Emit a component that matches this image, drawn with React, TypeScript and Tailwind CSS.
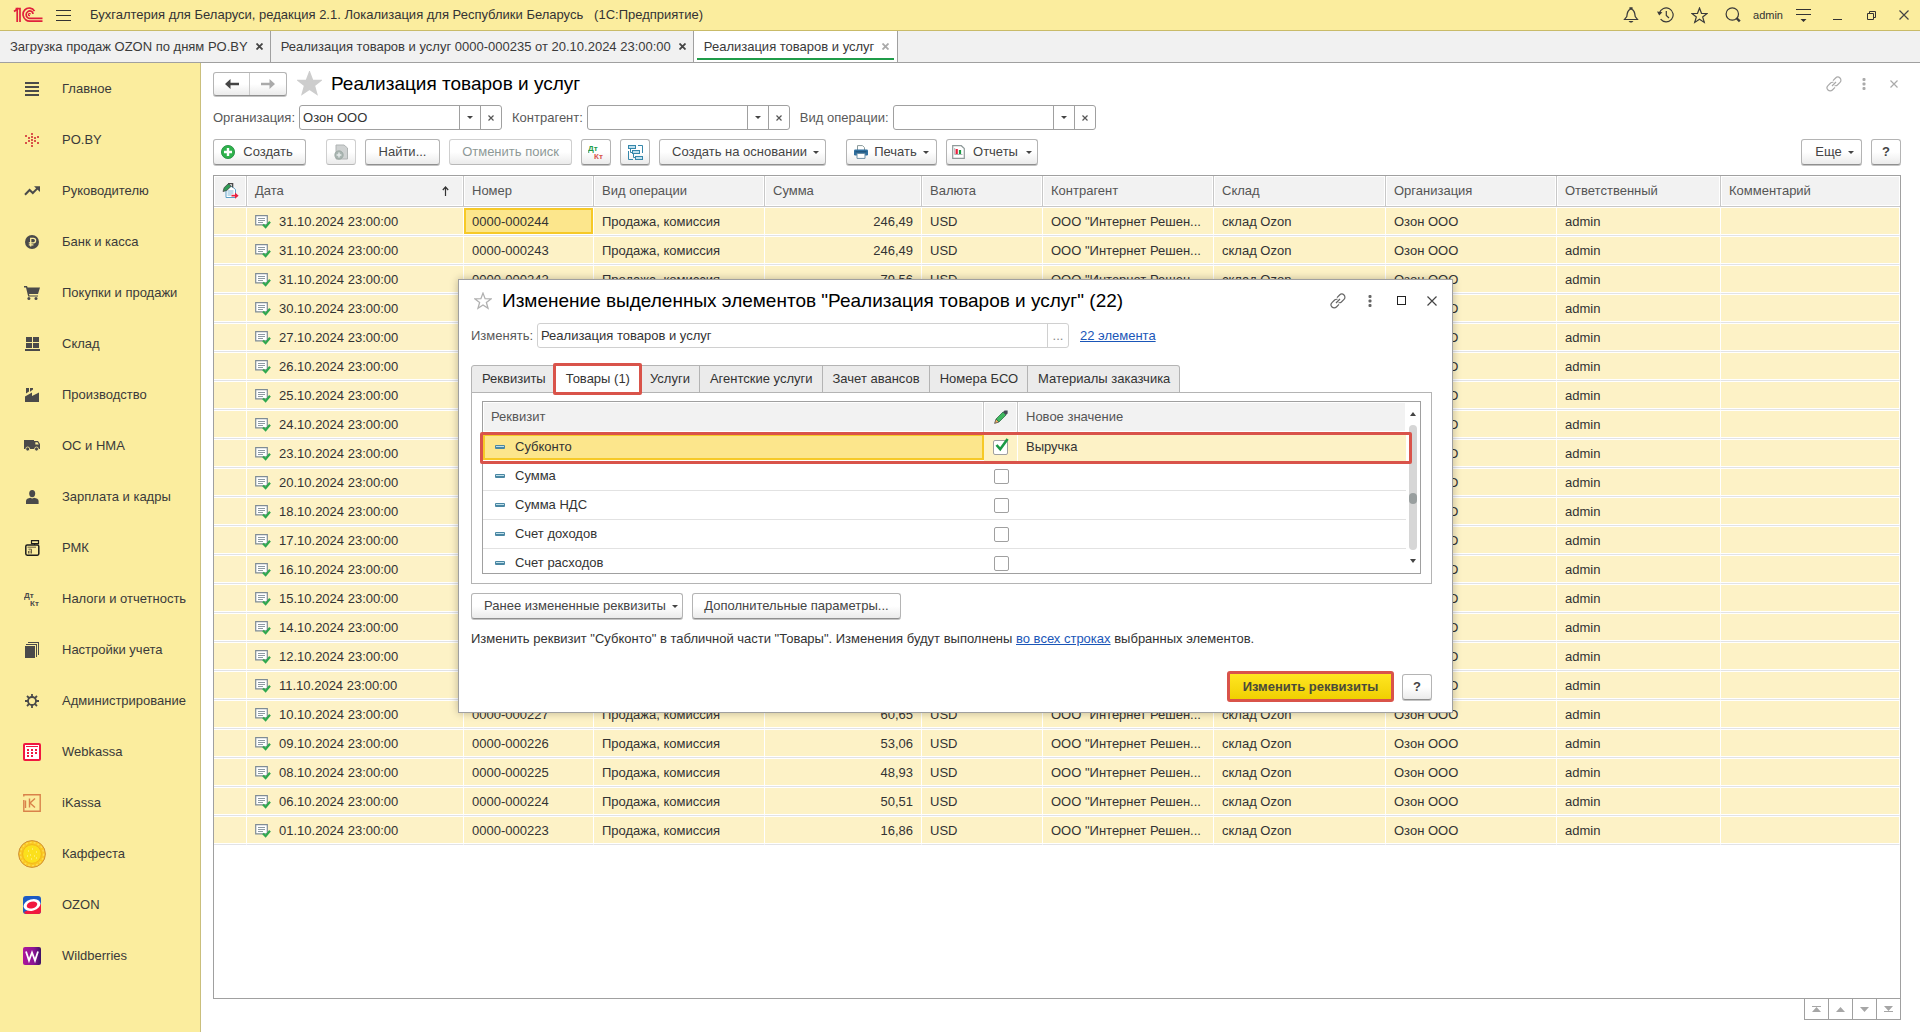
import type { ReactNode } from "react";
import clsx from "clsx";

const LOGO_RED = "#e0203c";

const LogoIcon = () => (
  <svg width="30" height="16" viewBox="0 0 30 16" fill="none" stroke={LOGO_RED} strokeWidth="1.7">
    <path d="M1 4.5 L4.2 2.2 V15" />
    <path d="M2.6 1.6 H7 V15" />
    <path d="M21.5 4.2 C19.5 0.4 14.5 0 11.8 2.9 C8.8 6.2 9.9 11 13 13 C14 13.8 15.2 14.1 16.5 14.1 H29.5" />
    <path d="M20 7 C20 4.4 17 3.2 14.8 4.6 C12.4 6.2 12.8 9.4 14.6 10.6 C15.4 11.2 16 11.3 17 11.3 H29.5" />
    <path d="M17.6 7.2 C17 6 15.2 6.6 15.4 8 C15.5 8.6 16 8.8 17 8.7" strokeWidth="1.2" />
  </svg>
);

const BellIcon = () => (
  <svg width="16" height="16" viewBox="0 0 16 16" fill="none" stroke="#3a3a3a" strokeWidth="1.2">
    <path d="M1.5 12.5 H14.5 L12.2 9.5 C11.8 6 11.6 3 8 2 C4.4 3 4.2 6 3.8 9.5 Z M7 2 V0.8 H9 V2" />
    <path d="M5.5 14 H10.5 L9 15.5 H7 Z" fill="#3a3a3a" stroke="none" />
  </svg>
);

const HistoryIcon = () => (
  <svg width="17" height="16" viewBox="0 0 17 16" fill="none" stroke="#3a3a3a" strokeWidth="1.2">
    <path d="M2.4 6 A7 7 0 1 1 3.6 12.2" />
    <path d="M9.3 4 V8.4 L12 11" />
    <path d="M0 4.5 L5.4 5.2 L2.2 8.6 Z" fill="#3a3a3a" stroke="none" />
  </svg>
);

const StarIcon = ({ size, fill, stroke }: { size: number; fill: string; stroke: string }) => (
  <svg width={size} height={size} viewBox="0 0 24 24" fill={fill} stroke={stroke} strokeWidth="1.7">
    <path d="M12 1.5 L14.8 8.9 L22.6 9.2 L16.5 14 L18.7 21.8 L12 17.3 L5.3 21.8 L7.5 14 L1.4 9.2 L9.2 8.9 Z" />
  </svg>
);

const SearchIcon = () => (
  <svg width="16" height="16" viewBox="0 0 16 16" fill="none" stroke="#3a3a3a">
    <circle cx="7.3" cy="7" r="6.2" strokeWidth="1.2" />
    <path d="M11.4 11 L14.8 14.4" strokeWidth="2.4" />
  </svg>
);

const LinkIcon = ({ color }: { color: string }) => (
  <svg width="16" height="16" viewBox="0 0 16 16" fill="none" stroke={color} strokeWidth="1.2">
    <path d="M7 4.6 L9.6 2 A3 3 0 0 1 14 6.4 L11.4 9 A3 3 0 0 1 8.6 9.6" />
    <path d="M9 11.4 L6.4 14 A3 3 0 0 1 2 9.6 L4.6 7 A3 3 0 0 1 7.4 6.4" />
    <path d="M6 10 L10 6" />
  </svg>
);

const DotsIcon = ({ color }: { color: string }) => (
  <svg width="4" height="12" viewBox="0 0 4 12" fill={color}>
    <rect x="0.5" y="0" width="3" height="3" rx="1" />
    <rect x="0.5" y="4.5" width="3" height="3" rx="1" />
    <rect x="0.5" y="9" width="3" height="3" rx="1" />
  </svg>
);

const CrossIcon = ({ size, color, width = 1.2 }: { size: number; color: string; width?: number }) => (
  <svg width={size} height={size} viewBox={`0 0 ${size} ${size}`} stroke={color} strokeWidth={width}>
    <path d={`M0.5 0.5 L${size - 0.5} ${size - 0.5} M${size - 0.5} 0.5 L0.5 ${size - 0.5}`} />
  </svg>
);

const CaretIcon = () => (
  <svg width="6" height="3" viewBox="0 0 6 3" fill="#444" className="shrink-0">
    <path d="M0 0 H6 L3 3 Z" />
  </svg>
);

const ArrowIcon = ({ color, flip }: { color: string; flip?: boolean }) => (
  <svg width="14" height="10" viewBox="0 0 14 10" className={clsx(flip && "rotate-180")}>
    <path d="M0 5 L5.5 0 V3.8 H14 V6.2 H5.5 V10 Z" fill={color} />
  </svg>
);

const DocPostedIcon = () => (
  <svg width="16" height="14" viewBox="0 0 16 14" fill="none" className="shrink-0">
    <path d="M0.7 0.7 H12.3 V9.8 H0.7 Z" fill="#fff" stroke="#7f8c95" strokeWidth="1.2" />
    <path d="M3 3.5 H10 M3 5.5 H10 M3 7.5 H8" stroke="#8d9aa2" />
    <path d="M8 9.5 L10.6 12.2 L15 6.8" stroke="#2fa84f" strokeWidth="2.2" />
  </svg>
);

const ListEditIcon = () => (
  <svg width="17" height="16" viewBox="0 0 17 16" fill="none">
    <path d="M4 3.5 H10 L13.5 6.5 V14.5 H4 Z" fill="#fff" stroke="#5aa0c8" />
    <path d="M5.5 8 H11.5 M5.5 10 H11.5 M5.5 12 H9.5" stroke="#7fb6d4" />
    <path d="M1 8.5 L2.2 4.6 L6.4 0.6 L9.2 3.2 L4.8 7.4 Z" fill="#2f9b55" stroke="#4a4a4a" strokeWidth="0.8" />
    <path d="M6 0.6 H10.6 V4.6" stroke="#4a4a4a" strokeWidth="1.4" />
    <path d="M9.5 11.8 H13 V9.6 L16.6 12.7 L13 15.8 V13.6 H9.5 Z" fill="#e8203f" />
  </svg>
);

const DtKtIcon = ({ top, bottom }: { top: string; bottom: string }) => (
  <svg width="17" height="16" viewBox="0 0 17 16" fontFamily="Liberation Sans, sans-serif" fontWeight="bold">
    <text x="0" y="7" fontSize="8" fill={top}>Дт</text>
    <text x="6" y="15" fontSize="8" fill={bottom}>Кт</text>
  </svg>
);

const StructureIcon = () => (
  <svg width="15" height="15" viewBox="0 0 15 15" fill="none" stroke="#3587ab">
    <path d="M10 0.5 H14.5 V8 M0.5 6 V14.5 H5 M2.5 4 V7.5 H4 M5.5 9 V12.5 H7" />
    <rect x="0.5" y="0.5" width="7" height="3" fill="#bfe0ee" />
    <rect x="4.5" y="5.5" width="7" height="3" fill="#bfe0ee" />
    <rect x="7.5" y="11.5" width="7" height="3" fill="#bfe0ee" />
  </svg>
);

const PlusIcon = () => (
  <svg width="14" height="14" viewBox="0 0 14 14">
    <circle cx="7" cy="7" r="6.6" fill="#2fb24c" stroke="#1e8a3c" strokeWidth="0.8" />
    <path d="M7 3 V11 M3 7 H11" stroke="#fff" strokeWidth="2.4" />
  </svg>
);

const CopyIcon = () => (
  <svg width="15" height="16" viewBox="0 0 15 16">
    <path d="M2 1 H10 L13.5 4 V15 H2 Z" fill="#cfd2d2" stroke="#b0b4b4" />
    <circle cx="5" cy="11" r="4.2" fill="#a9b5b1" stroke="#98a4a0" strokeWidth="0.8" />
    <path d="M5 8.6 V13.4 M2.6 11 H7.4" stroke="#e6eaea" strokeWidth="1.4" />
  </svg>
);

const PrinterIcon = () => (
  <svg width="14" height="14" viewBox="0 0 14 14">
    <path d="M3.5 5 V0.6 H8.5 L10.5 2.6 V5" fill="#fff" stroke="#8a9a9a" />
    <rect x="0" y="4.5" width="14" height="6" rx="1.2" fill="#2f6f9f" />
    <path d="M1.5 6.8 H12.5" stroke="#1d4d73" />
    <path d="M3 8.5 H11 V13.4 H3 Z" fill="#fff" stroke="#6d8ea5" />
  </svg>
);

const ReportIcon = () => (
  <svg width="13" height="14" viewBox="0 0 13 14">
    <path d="M0.7 0.7 H9.3 L12.3 3.5 V13.3 H0.7 Z" fill="#fff" stroke="#8f9a9a" strokeWidth="1.2" />
    <path d="M2.7 3 V9.5 H10.5" fill="none" stroke="#9aa5a5" strokeWidth="0.8" />
    <rect x="3.6" y="4" width="2.2" height="5" fill="#e8203f" />
    <rect x="6.9" y="5" width="2.2" height="4" fill="#1a9a45" />
  </svg>
);

const PencilIcon = () => (
  <svg width="14" height="14" viewBox="0 0 14 14">
    <path d="M0.6 13.4 L2 9 L5 12 Z" fill="#f0b060" stroke="#4f4f4f" strokeWidth="0.8" />
    <path d="M2 9 L9 2 L12 5 L5 12 Z" fill="#3fb860" stroke="#2f6f48" strokeWidth="0.8" />
    <path d="M9 2 L10.6 0.4 H13.6 V3.4 L12 5 Z" fill="#444c55" />
  </svg>
);

const DashIcon = () => (
  <svg width="10" height="4" viewBox="0 0 10 4">
    <rect width="10" height="4" rx="1" fill="#4a87a3" />
    <rect x="1" y="1" width="8" height="1" fill="#bfe0ea" />
  </svg>
);

const G = "#4a4a4a";

const poByDots = [
  [6, 0], [0, 2], [12, 3], [6, 3], [3, 4], [9, 4], [6, 6],
  [3, 7], [9, 7], [0, 9], [6, 9], [12, 9], [6, 12],
];

const sections: { title: string; icon: ReactNode }[] = [
  {
    title: "Главное",
    icon: (
      <svg width="14" height="14" viewBox="0 0 14 14" fill={G} shapeRendering="crispEdges">
        <path d="M0 0 H14 V2 H0 Z M0 4 H14 V6 H0 Z M0 8 H14 V10 H0 Z M0 12 H14 V14 H0 Z" />
      </svg>
    ),
  },
  {
    title: "PO.BY",
    icon: (
      <svg width="14" height="14" viewBox="0 0 14 14" fill="#d9534a" shapeRendering="crispEdges">
        {poByDots.map(([x, y]) => (
          <rect key={`${x}-${y}`} x={x} y={y} width="2" height="2" />
        ))}
      </svg>
    ),
  },
  {
    title: "Руководителю",
    icon: (
      <svg width="16" height="10" viewBox="0 0 16 10">
        <path d="M1 8.8 L5.6 4 L8.8 7 L13.4 2.4" fill="none" stroke={G} strokeWidth="2" />
        <path d="M10 0.3 H16 V6 Z" fill={G} />
      </svg>
    ),
  },
  {
    title: "Банк и касса",
    icon: (
      <svg width="14" height="14" viewBox="0 0 14 14">
        <circle cx="7" cy="7" r="7" fill={G} />
        <path d="M5.7 11.6 V3.4 H8.4 A2.2 2.2 0 0 1 8.4 7.8 H3.8 M3.8 9.8 H8.4" fill="none" stroke="#fbed9e" strokeWidth="1.3" />
      </svg>
    ),
  },
  {
    title: "Покупки и продажи",
    icon: (
      <svg width="16" height="14" viewBox="0 0 16 14" fill={G}>
        <path d="M0 0 H3 L3.6 1.4 H16 L14 8 H5 L5.4 9.4 H14 V10.6 H4.2 L2 1.4 H0 Z" />
        <circle cx="4.9" cy="12.5" r="1.5" />
        <circle cx="12" cy="12.5" r="1.5" />
      </svg>
    ),
  },
  {
    title: "Склад",
    icon: (
      <svg width="15" height="14" viewBox="0 0 15 14" fill={G} shapeRendering="crispEdges">
        <path d="M1 0 H7 V5 H1 Z M8 0 H14 V5 H8 Z M1 6 H7 V11 H1 Z M8 6 H14 V11 H8 Z M0 12 H15 V14 H0 Z" />
      </svg>
    ),
  },
  {
    title: "Производство",
    icon: (
      <svg width="14" height="14" viewBox="0 0 14 14" fill={G}>
        <path d="M0 14 V8.6 L7 4.6 V8 L14 4.4 V14 Z M1 0 H4 V3.4 L1 5.6 Z M5 0 H8 V1.6 L5 3.8 Z" />
      </svg>
    ),
  },
  {
    title: "ОС и НМА",
    icon: (
      <svg width="16" height="11" viewBox="0 0 16 11" fill={G}>
        <path d="M0 0 H10 V1 H14 L16 4 V9 H0 Z" />
        <path d="M11.3 2.2 H13.5 L14.8 4.6 H11.3 Z" fill="#fbed9e" />
        <circle cx="3.7" cy="9" r="2" stroke="#fbed9e" strokeWidth="0.8" />
        <circle cx="12.5" cy="9" r="2" stroke="#fbed9e" strokeWidth="0.8" />
      </svg>
    ),
  },
  {
    title: "Зарплата и кадры",
    icon: (
      <svg width="13" height="14" viewBox="0 0 13 14" fill={G}>
        <ellipse cx="6.2" cy="3.6" rx="3" ry="3.6" />
        <path d="M0 14 V11 C0 9 2 8.2 4.4 7.8 C5.6 8.6 6.8 8.6 8 7.8 C10.6 8.2 12.6 9 12.6 11 V14 Z" />
      </svg>
    ),
  },
  {
    title: "РМК",
    icon: (
      <svg width="15" height="16" viewBox="0 0 15 16" fill="none" stroke="#1c1c1c">
        <rect x="0.8" y="5" width="13" height="10.2" rx="1.4" strokeWidth="1.5" />
        <path d="M6.5 0.6 H13.5 V3.6 H6.5 Z M9.5 3.6 V5" strokeWidth="1.2" />
        <path d="M2.5 7.2 H11 M3.5 9.2 H6.5 V13.5 M3.5 11 V13.5 M5 10.5 V13.5" stroke="#6a6040" />
      </svg>
    ),
  },
  { title: "Налоги и отчетность", icon: <DtKtIcon top={G} bottom={G} /> },
  {
    title: "Настройки учета",
    icon: (
      <svg width="14" height="16" viewBox="0 0 14 16" fill={G} shapeRendering="crispEdges">
        <path d="M0 4 H10 V16 H0 Z M1 2 H12 V15 H11 V3 H1 Z M3 0 H14 V13 H13 V1 H3 Z" />
      </svg>
    ),
  },
  {
    title: "Администрирование",
    icon: (
      <svg width="14" height="14" viewBox="0 0 14 14" fill="none" stroke={G}>
        <circle cx="7" cy="7" r="4" strokeWidth="1.8" />
        <path d="M7 0 V3 M7 11 V14 M0 7 H3 M11 7 H14 M2 2 L4.2 4.2 M9.8 9.8 L12 12 M12 2 L9.8 4.2 M4.2 9.8 L2 12" strokeWidth="1.8" />
      </svg>
    ),
  },
  {
    title: "Webkassa",
    icon: (
      <svg width="18" height="18" viewBox="0 0 18 18" fill="#f0193f">
        <rect x="1" y="1" width="16" height="16" rx="1" fill="#fff" stroke="#f0193f" strokeWidth="2" />
        <path d="M3 3 H15 V4 H3 Z M4 6 H6 V8 H4 Z M8 6 H10 V8 H8 Z M12 6 H14 V8 H12 Z M4 9 H6 V11 H4 Z M8 9 H10 V11 H8 Z M12 9 H14 V11 H12 Z M4 12 H6 V14 H4 Z M8 12 H10 V14 H8 Z" />
      </svg>
    ),
  },
  {
    title: "iKassa",
    icon: (
      <svg width="18" height="18" viewBox="0 0 18 18" fill="none" stroke="#d9824a" strokeWidth="1.4">
        <path d="M0.8 2.5 V0.8 H17.2 V17.2 H0.8 V6" />
        <path d="M2.5 6.5 V14 M6.5 4.5 V13.5 M12 4.5 L7 9 L12 13.5" />
      </svg>
    ),
  },
  {
    title: "Каффеста",
    icon: (
      <svg width="28" height="28" viewBox="0 0 28 28">
        <circle cx="14" cy="14" r="13.4" fill="#fbc822" stroke="#cf9038" />
        <circle cx="14" cy="14" r="11.6" fill="none" stroke="#fddb50" strokeWidth="1.4" strokeDasharray="2 2" />
        <circle cx="14" cy="14" r="9.4" fill="#fbe01c" stroke="#f3b51c" />
        <path d="M10 11 h1 M14 9 h1 M18 12 h1 M12 15 h1 M16 16 h1 M13 19 h1 M18 18 h1 M9 16 h1" stroke="#fff6a8" />
      </svg>
    ),
  },
  {
    title: "OZON",
    icon: (
      <svg width="18" height="18" viewBox="0 0 18 18">
        <rect width="18" height="18" rx="3" fill="#1c5bc4" />
        <path d="M18 8 V15 A3 3 0 0 1 15 18 H3 A3 3 0 0 1 1 16 Z" fill="#f0193f" />
        <ellipse cx="9" cy="9" rx="8.6" ry="5.6" fill="#fff" transform="rotate(-16 9 9)" />
        <ellipse cx="9" cy="9" rx="5.4" ry="3.4" fill="#f0193f" transform="rotate(-16 9 9)" />
      </svg>
    ),
  },
  {
    title: "Wildberries",
    icon: (
      <svg width="18" height="18" viewBox="0 0 18 18">
        <defs>
          <linearGradient id="wb">
            <stop offset="0" stopColor="#ad169c" />
            <stop offset="0.6" stopColor="#8a1494" />
            <stop offset="1" stopColor="#3d1266" />
          </linearGradient>
        </defs>
        <rect width="18" height="18" rx="2" fill="url(#wb)" />
        <path d="M3 4.5 L6 13.5 L9 5.5 L12 13.5 L15 4.5" fill="none" stroke="#fff" strokeWidth="1.8" />
      </svg>
    ),
  },
];

const docs: [string, string, string][] = [
  ["31.10.2024", "244", "246,49"],
  ["31.10.2024", "243", "246,49"],
  ["31.10.2024", "242", "79,56"],
  ["30.10.2024", "241", ""],
  ["27.10.2024", "240", ""],
  ["26.10.2024", "239", ""],
  ["25.10.2024", "238", ""],
  ["24.10.2024", "237", ""],
  ["23.10.2024", "236", ""],
  ["20.10.2024", "235", ""],
  ["18.10.2024", "234", ""],
  ["17.10.2024", "233", ""],
  ["16.10.2024", "232", ""],
  ["15.10.2024", "231", ""],
  ["14.10.2024", "230", ""],
  ["12.10.2024", "229", ""],
  ["11.10.2024", "228", ""],
  ["10.10.2024", "227", "60,65"],
  ["09.10.2024", "226", "53,06"],
  ["08.10.2024", "225", "48,93"],
  ["06.10.2024", "224", "50,51"],
  ["01.10.2024", "223", "16,86"],
];

const openTabs = [
  { title: "Загрузка продаж OZON по дням PO.BY", active: false },
  { title: "Реализация товаров и услуг 0000-000235 от 20.10.2024 23:00:00", active: false },
  { title: "Реализация товаров и услуг", active: true },
];

const dialogTabs = [
  "Реквизиты",
  "Товары (1)",
  "Услуги",
  "Агентские услуги",
  "Зачет авансов",
  "Номера БСО",
  "Материалы заказчика",
];

const attributes = [
  { title: "Субконто", value: "Выручка", checked: true },
  { title: "Сумма", value: "", checked: false },
  { title: "Сумма НДС", value: "", checked: false },
  { title: "Счет доходов", value: "", checked: false },
  { title: "Счет расходов", value: "", checked: false },
];

const Btn = ({
  children,
  className,
  disabled,
  label,
}: {
  children: ReactNode;
  className?: string;
  disabled?: boolean;
  label?: string;
}) => (
  <button
    disabled={disabled}
    aria-label={label}
    className={clsx(
      "flex h-[26px] shrink-0 items-center justify-center rounded-[3px] border bg-linear-to-b from-white from-50% to-[#ebebeb] whitespace-nowrap",
      disabled
        ? "border-[#cfcfcf] border-b-[#b8b8b8] text-[#8d9896]"
        : "border-[#b4b4b4] border-b-[#8f8f8f] text-[#444] shadow-[0_1px_0_#c4c4c4]",
      className
    )}
  >
    {children}
  </button>
);

const Combo = ({ id, label, value }: { id: string; label: string; value: string }) => (
  <div className="flex items-center">
    <label htmlFor={id} className="pr-1 text-[#595959]">
      {label}
    </label>
    <div className="flex h-[25px] w-[203px] rounded-[3px] border border-[#a0a0a0] bg-white">
      <input id={id} defaultValue={value} className="w-0 flex-1 px-[3px] text-[#333] outline-none" />
      <button aria-label="Выбрать" className="flex w-[21px] items-center justify-center border-l border-[#a0a0a0]">
        <CaretIcon />
      </button>
      <button aria-label="Очистить" className="flex w-[21px] items-center justify-center border-l border-[#a0a0a0]">
        <CrossIcon size={6} color="#555" />
      </button>
    </div>
  </div>
);

const TopBar = () => (
  <header className="flex h-[31px] shrink-0 items-center border-b border-[#c9bb68] bg-[#fbed9e] text-[#333]">
    <div className="pl-[13px]">
      <LogoIcon />
    </div>
    <button aria-label="Меню" className="ml-[13px] flex flex-col gap-1">
      <span className="block h-px w-[15px] bg-[#333]" />
      <span className="block h-px w-[15px] bg-[#333]" />
      <span className="block h-px w-[15px] bg-[#333]" />
    </button>
    <h1 className="ml-[19px] flex-1 whitespace-pre">
      Бухгалтерия для Беларуси, редакция 2.1. Локализация для Республики Беларусь{"   "}(1С:Предприятие)
    </h1>
    <div className="flex items-center">
      <button aria-label="Уведомления" className="flex w-[34px] justify-center">
        <BellIcon />
      </button>
      <button aria-label="История" className="flex w-[34px] justify-center">
        <HistoryIcon />
      </button>
      <button aria-label="Избранное" className="flex w-[34px] justify-center">
        <StarIcon size={17} fill="none" stroke="#3a3a3a" />
      </button>
      <button aria-label="Поиск" className="flex w-[34px] justify-center">
        <SearchIcon />
      </button>
      <span className="w-[36px] text-center text-[11px]">admin</span>
      <button aria-label="Настройки" className="flex w-[34px] justify-center">
        <svg width="15" height="13" viewBox="0 0 15 13" fill="#333">
          <path d="M0 0 H15 V1 H0 Z M0 5 H15 V6 H0 Z M4.5 10 H10.5 L7.5 13 Z" />
        </svg>
      </button>
      <button aria-label="Свернуть" className="flex w-[34px] justify-center pt-2">
        <span className="block h-px w-[9px] bg-[#333]" />
      </button>
      <button aria-label="Развернуть" className="flex w-[34px] justify-center">
        <svg width="9" height="9" viewBox="0 0 9 9" fill="none" stroke="#333">
          <path d="M0.5 2.5 H6.5 V8.5 H0.5 Z M2.5 2.5 V0.5 H8.5 V6.5 H6.5" />
        </svg>
      </button>
      <button aria-label="Закрыть" className="flex w-8 justify-center">
        <CrossIcon size={10} color="#444" />
      </button>
    </div>
  </header>
);

const TabStrip = () => (
  <nav className="flex h-8 shrink-0 border-b border-[#a0a0a0] bg-[#f1f1f1]">
    {openTabs.map((tab) => (
      <div
        key={tab.title}
        className={clsx(
          "relative flex items-center border-r border-[#a0a0a0] text-[#3a3a3a]",
          tab.active ? "bg-white pr-2 pl-[10px]" : "pr-[7px] pl-[10px]"
        )}
      >
        <button className="whitespace-nowrap">{tab.title}</button>
        <button aria-label="Закрыть вкладку" className="ml-2">
          <CrossIcon size={7} color={tab.active ? "#aaa" : "#444"} width={1.8} />
        </button>
        {tab.active && <span className="absolute inset-x-[3px] bottom-[2px] h-[2px] bg-[#1f9c49]" />}
      </div>
    ))}
  </nav>
);

const Sidebar = () => (
  <aside className="w-[201px] shrink-0 border-r border-[#cabf7c] bg-[#fbed9e] text-[#3a3a3a]">
    {sections.map((s) => (
      <button key={s.title} className="flex h-[51px] w-full items-center gap-[10px] pl-3 text-left whitespace-nowrap">
        <span className="flex w-10 shrink-0 justify-center">{s.icon}</span>
        {s.title}
      </button>
    ))}
  </aside>
);

const th = "border-r border-b border-[#c8c8c8] px-2 text-left font-normal shadow-[inset_0_0_0_1px_#fff] last:border-r-0";
const td =
  "border-r border-b border-r-white border-b-[#e2e3e6] bg-[#fdf2c6] px-2 pt-[2px] shadow-[inset_0_1px_0_#fff,inset_0_-1px_0_#fff]";

const DocTable = () => (
  <div className="min-h-0 flex-1 overflow-hidden border border-[#a0a0a0] bg-white">
    <table className="w-full table-fixed border-separate border-spacing-0 whitespace-nowrap text-[#333]">
      <colgroup>
        <col className="w-[33px]" />
        <col className="w-[217px]" />
        <col className="w-[130px]" />
        <col className="w-[171px]" />
        <col className="w-[157px]" />
        <col className="w-[121px]" />
        <col className="w-[171px]" />
        <col className="w-[172px]" />
        <col className="w-[171px]" />
        <col className="w-[164px]" />
        <col />
      </colgroup>
      <thead>
        <tr className="h-[31px] bg-[#f2f2f2] text-[#555]">
          <th className={th}>
            <ListEditIcon />
          </th>
          <th className={th}>
            <div className="flex items-center justify-between pr-[6px]">
              Дата
              <svg width="7" height="10" viewBox="0 0 7 10" fill="none" stroke="#333" strokeWidth="1.2">
                <path d="M3.5 10 V1 M0.8 4 L3.5 1 L6.2 4" />
              </svg>
            </div>
          </th>
          <th className={th}>Номер</th>
          <th className={th}>Вид операции</th>
          <th className={th}>Сумма</th>
          <th className={th}>Валюта</th>
          <th className={th}>Контрагент</th>
          <th className={th}>Склад</th>
          <th className={th}>Организация</th>
          <th className={th}>Ответственный</th>
          <th className={th}>Комментарий</th>
        </tr>
      </thead>
      <tbody>
        {docs.map(([date, num, sum], i) => (
          <tr key={num} className="h-[29px]">
            <td className={td} />
            <td className={td}>
              <div className="flex items-center gap-2">
                <DocPostedIcon />
                {date} 23:00:00
              </div>
            </td>
            {i === 0 ? (
              <td className="border-r border-b border-r-white border-b-[#e2e3e6] p-0">
                <div className="flex h-[26px] items-center border-2 border-[#f6c927] bg-[#fce68c] px-[6px] pt-px">
                  0000-000{num}
                </div>
              </td>
            ) : (
              <td className={td}>0000-000{num}</td>
            )}
            <td className={td}>Продажа, комиссия</td>
            <td className={clsx(td, "text-right")}>{sum}</td>
            <td className={td}>USD</td>
            <td className={td}>ООО "Интернет Решен...</td>
            <td className={td}>склад Ozon</td>
            <td className={td}>Озон ООО</td>
            <td className={td}>admin</td>
            <td className={td} />
          </tr>
        ))}
      </tbody>
    </table>
  </div>
);

const Toolbar = () => (
  <div className="mt-[9px] flex items-center gap-[9px]">
    <Btn className="w-[93px] gap-2 pr-[5px]">
      <PlusIcon />
      Создать
    </Btn>
    <Btn disabled label="Скопировать" className="ml-[11px] w-[30px]">
      <CopyIcon />
    </Btn>
    <Btn className="w-[75px]">Найти...</Btn>
    <Btn disabled className="w-[123px]">
      Отменить поиск
    </Btn>
    <Btn label="Проводки" className="w-[30px]">
      <DtKtIcon top="#1f9c49" bottom="#d9534a" />
    </Btn>
    <Btn label="Структура подчиненности" className="w-[30px]">
      <StructureIcon />
    </Btn>
    <Btn className="w-[167px] gap-[6px] pl-[6px]">
      Создать на основании
      <CaretIcon />
    </Btn>
    <Btn className="ml-[11px] w-[91px] gap-[6px]">
      <PrinterIcon />
      Печать
      <CaretIcon />
    </Btn>
    <Btn className="w-[92px] gap-2">
      <ReportIcon />
      Отчеты
      <CaretIcon />
    </Btn>
    <div className="flex-1" />
    <Btn className="w-[61px] gap-[6px] pl-[6px]">
      Еще
      <CaretIcon />
    </Btn>
    <Btn className="w-[30px] font-bold">?</Btn>
  </div>
);

const Pager = () => {
  const paths = ["M0 0 H9 V1 H0 Z M4.5 1 L9 6 H0 Z", "M4.5 1 L9 6 H0 Z", "M0 1 H9 L4.5 6 Z", "M0 0 H9 L4.5 5 Z M0 5 H9 V6 H0 Z"];
  const labels = ["В начало", "Вверх", "Вниз", "В конец"];
  return (
    <div className="flex self-end border-l border-[#a0a0a0]">
      {paths.map((d, i) => (
        <button
          key={labels[i]}
          aria-label={labels[i]}
          className="flex h-[21px] w-6 items-center justify-center border-r border-b border-[#a0a0a0]"
        >
          <svg width="9" height="6" viewBox="0 0 9 6" fill="#a6a6a6">
            <path d={d} />
          </svg>
        </button>
      ))}
    </div>
  );
};

const AttributeTable = () => (
  <div className="relative flex h-[173px] border border-[#a0a0a0]">
    <div className="flex-1 overflow-hidden">
      <table className="w-full table-fixed border-separate border-spacing-0 text-[#333]">
        <colgroup>
          <col />
          <col className="w-[34px]" />
          <col className="w-[388px]" />
        </colgroup>
        <thead>
          <tr className="h-[31px] bg-[#f2f2f2] text-[#555]">
            <th className={th}>Реквизит</th>
            <th className="border-r border-b border-[#c8c8c8] shadow-[inset_0_0_0_1px_#fff]">
              <div className="flex justify-center">
                <PencilIcon />
              </div>
            </th>
            <th className={th}>Новое значение</th>
          </tr>
        </thead>
        <tbody>
          {attributes.map((a) => (
            <tr key={a.title} className="h-[29px]">
              <td className="border-b border-[#e2e2e2] p-0">
                <div
                  className={clsx(
                    "flex h-[26px] items-center gap-[10px] border-2 px-[10px]",
                    a.checked ? "border-[#f6c927] bg-[#fce68c]" : "border-transparent"
                  )}
                >
                  <DashIcon />
                  {a.title}
                </div>
              </td>
              <td className={clsx("border-b border-[#e2e2e2] p-0", a.checked && "border-r border-r-white bg-[#fdf2c6]")}>
                <label className="relative mx-auto block h-[15px] w-[15px]">
                  <input
                    type="checkbox"
                    aria-label={a.title}
                    defaultChecked={a.checked}
                    className="block h-[15px] w-[15px] appearance-none rounded-[2px] border border-[#a0a0a0] bg-white"
                  />
                  {a.checked && (
                    <svg width="15" height="14" viewBox="0 0 15 14" className="absolute -top-[2px] left-[2px]">
                      <path d="M1.5 7 L5.2 11.2 L12.6 1" fill="none" stroke="#1a9a45" strokeWidth="2.6" />
                    </svg>
                  )}
                </label>
              </td>
              <td className={clsx("border-b border-[#e2e2e2] px-2", a.checked && "bg-[#fdf2c6]")}>{a.value}</td>
            </tr>
          ))}
        </tbody>
      </table>
    </div>
    <div className="flex w-[14px] flex-col items-center justify-between py-[10px]">
      <svg width="6" height="4" viewBox="0 0 6 4" fill="#444">
        <path d="M3 0 L6 4 H0 Z" />
      </svg>
      <div className="my-[9px] flex w-2 flex-1 flex-col items-center rounded-full bg-[#d6d6d6] pt-[68px]">
        <span className="block h-[11px] w-2 rounded-full bg-[#999f9f]" />
      </div>
      <svg width="6" height="4" viewBox="0 0 6 4" fill="#444">
        <path d="M0 0 H6 L3 4 Z" />
      </svg>
    </div>
    <div className="pointer-events-none absolute top-[30px] right-[8px] -left-[3px] h-[32px] rounded-[2px] border-3 border-[#d9534a]" />
  </div>
);

const Dialog = () => (
  <section
    role="dialog"
    aria-labelledby="dialog-title"
    className="absolute top-[279px] left-[458px] flex w-[995px] flex-col border border-[#a0a0a0] bg-white text-[#333] shadow-[0_0_8px_rgba(0,0,0,0.25)]"
  >
    <div className="flex h-[41px] items-center pr-1 pl-[15px]">
      <StarIcon size={18} fill="none" stroke="#b0b0b0" />
      <h2 id="dialog-title" className="ml-[10px] flex-1 text-[19px] text-black">
        Изменение выделенных элементов "Реализация товаров и услуг" (22)
      </h2>
      <button aria-label="Ссылка" className="flex w-8 justify-center">
        <LinkIcon color="#666" />
      </button>
      <button aria-label="Еще" className="flex w-8 justify-center">
        <DotsIcon color="#666" />
      </button>
      <button aria-label="Развернуть" className="flex w-[30px] justify-center">
        <span className="block h-[9px] w-[9px] border border-[#222]" />
      </button>
      <button aria-label="Закрыть" className="flex w-8 justify-center">
        <CrossIcon size={10} color="#444" />
      </button>
    </div>

    <div className="flex flex-col pt-[2px] pr-5 pb-[10px] pl-3">
      <div className="flex items-center">
        <label htmlFor="object" className="w-[66px] text-[#595959]">
          Изменять:
        </label>
        <div className="flex h-[25px] w-[532px] rounded-[3px] border border-[#d0d0d0]">
          <input id="object" readOnly value="Реализация товаров и услуг" className="w-0 flex-1 px-[3px] outline-none" />
          <button className="w-[21px] border-l border-[#d0d0d0] text-[#888]">...</button>
        </div>
        <a href="#items" className="ml-[11px] text-[#1a56b8] underline">
          22 элемента
        </a>
      </div>

      <div role="tablist" className="mt-[17px] flex h-7 self-start">
        {dialogTabs.map((tab, i) => (
          <button
            key={tab}
            role="tab"
            aria-selected={i === 1}
            className={clsx(
              "relative h-7 border-t border-r border-b border-[#b4b4b4] pr-[9px] pl-[10px] whitespace-nowrap",
              i === 0 && "rounded-tl-[3px] border-l",
              i === 1 ? "z-10 bg-white" : "bg-[#ebebeb]",
              i === dialogTabs.length - 1 && "rounded-tr-[3px]"
            )}
          >
            {tab}
            {i === 1 && <span className="absolute -inset-[3px] rounded-[2px] border-3 border-[#d9534a]" />}
          </button>
        ))}
      </div>
      <div className="-mt-px border border-[#b4b4b4] px-[10px] pt-2 pb-[9px]">
        <AttributeTable />
      </div>

      <div className="mt-[9px] flex gap-[9px]">
        <Btn className="w-[212px] gap-[6px] pl-2">
          Ранее измененные реквизиты
          <CaretIcon />
        </Btn>
        <Btn className="w-[209px]">Дополнительные параметры...</Btn>
      </div>
      <p className="mt-[10px] leading-5">
        Изменить реквизит "Субконто" в табличной части "Товары". Изменения будут выполнены{" "}
        <a href="#rows" className="text-[#1a56b8] underline">
          во всех строках
        </a>{" "}
        выбранных элементов.
      </p>
      <div className="mt-[22px] flex items-center gap-2 self-end">
        <button className="h-[31px] w-[167px] rounded-[3px] border-3 border-[#d9534a] bg-linear-to-b from-[#ffe61f] to-[#f0d000] font-bold text-[#4a4a3a]">
          Изменить реквизиты
        </button>
        <Btn className="w-[30px] font-bold">?</Btn>
      </div>
    </div>
  </section>
);

export default function App() {
  return (
    <div className="relative flex h-screen flex-col overflow-hidden bg-white font-['Liberation_Sans',Arial,sans-serif] text-[13px] leading-4">
      <TopBar />
      <TabStrip />
      <div className="flex min-h-0 flex-1">
        <Sidebar />
        <main className="flex min-w-0 flex-1 flex-col pt-2 pr-[19px] pb-3 pl-3">
          <div className="flex items-center">
            <div className="flex rounded-[3px] border border-[#b4b4b4] border-b-[#8f8f8f] bg-linear-to-b from-white from-50% to-[#ebebeb] shadow-[0_1px_0_#c4c4c4]">
              <button aria-label="Назад" className="flex h-[22px] w-9 items-center justify-center border-r border-[#c8c8c8]">
                <ArrowIcon color="#444" />
              </button>
              <button aria-label="Вперед" className="flex h-[22px] w-9 items-center justify-center">
                <ArrowIcon color="#aaa" flip />
              </button>
            </div>
            <div className="ml-[10px]">
              <StarIcon size={25} fill="#cdcdcd" stroke="#cdcdcd" />
            </div>
            <h2 className="ml-[9px] flex-1 text-[19px] text-black">Реализация товаров и услуг</h2>
            <div className="-mr-2 flex items-center">
              <button aria-label="Ссылка" className="flex w-[30px] justify-center">
                <LinkIcon color="#aaa" />
              </button>
              <button aria-label="Еще" className="flex w-[30px] justify-center">
                <DotsIcon color="#aaa" />
              </button>
              <button aria-label="Закрыть" className="flex w-[30px] justify-center">
                <CrossIcon size={8} color="#aaa" />
              </button>
            </div>
          </div>
          <div className="mt-[9px] flex gap-[10px]">
            <Combo id="org" label="Организация:" value="Озон ООО" />
            <Combo id="partner" label="Контрагент:" value="" />
            <Combo id="operation" label="Вид операции:" value="" />
          </div>
          <Toolbar />
          <div className="mt-[10px] flex min-h-0 flex-1 flex-col">
            <DocTable />
            <Pager />
          </div>
        </main>
      </div>
      <Dialog />
    </div>
  );
}
